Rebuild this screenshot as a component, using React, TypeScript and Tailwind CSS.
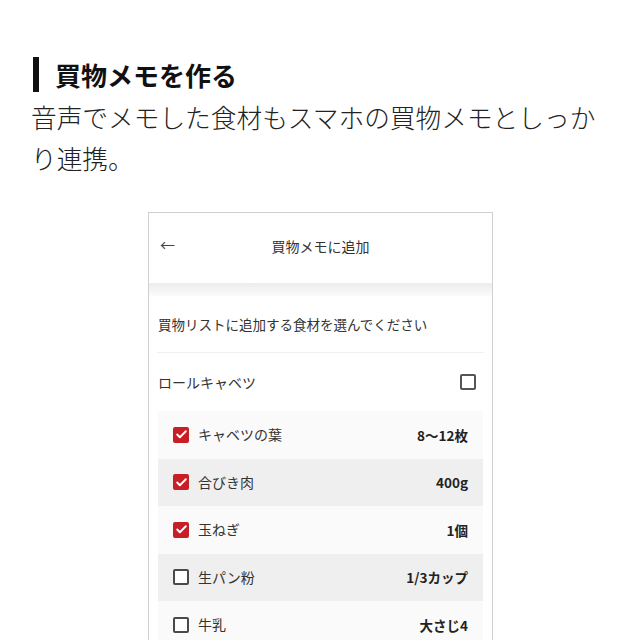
import { Check } from "lucide-react"

const font = { fontFamily: '"Noto Sans CJK JP", "Noto Sans", sans-serif' }

const items = [
    { name: 'キャベツの葉', qty: '8〜12枚', checked: true, bg: 'bg-[#fafafa]' },
    { name: '合びき肉', qty: '400g', checked: true, bg: 'bg-[#efefef]' },
    { name: '玉ねぎ', qty: '1個', checked: true, bg: 'bg-[#fafafa]' },
    { name: '生パン粉', qty: '1/3カップ', checked: false, bg: 'bg-[#efefef]' },
    { name: '牛乳', qty: '大さじ4', checked: false, bg: 'bg-[#fafafa]' },
]

const Box = (params: { checked: boolean }) => {
    if (params.checked) {
        return (
            <span className="w-[16px] h-[16px] rounded-[2px] bg-[#c81f26] flex items-center justify-center shrink-0">
                <Check className="w-[13px] h-[13px] text-white" strokeWidth={3.5} />
            </span>
        )
    }
    return <span className="w-[16px] h-[16px] rounded-[2px] border-2 border-[#4a4a4a] bg-white shrink-0" />
}

export default function App() {
    return (
        <div className="w-[640px] h-[640px] overflow-hidden bg-white text-[#222]" style={font}>
            <div className="pt-[57px] pl-[33px]">
                <div className="flex items-center h-[35px]">
                    <span className="w-[6px] h-[35px] bg-[#111]" />
                    <h1 className="ml-[16px] text-[26px] font-bold leading-none text-[#111]">買物メモを作る</h1>
                </div>
                <p className="mt-[4px] -ml-[2px] w-[590px] text-[25.7px] leading-[41px] font-light text-[#222]">
                    音声でメモした食材もスマホの買物メモとしっかり連携。
                </p>
            </div>

            <div className="mt-[34px] ml-[148px] w-[345px] border border-b-0 border-[#d0d0d0] text-[#333]">
                <div className="h-[70px] flex items-center relative">
                    <span className="absolute left-[11px] top-[24px] text-[15px] leading-none text-[#444]">←</span>
                    <span className="w-full text-center text-[14px] -mt-[4px]">買物メモに追加</span>
                </div>
                <div className="h-[13px] bg-gradient-to-b from-[#ececec] to-[#fbfbfb]" />
                <div className="h-[56px] flex items-center pl-[9px] text-[13.5px]">
                    買物リストに追加する食材を選んでください
                </div>
                <div className="mx-[8px] h-px bg-[#f0f0f0]" />
                <div className="h-[58px] flex items-center justify-between pl-[9px] pr-[16px] text-[14px]">
                    <span>ロールキャベツ</span>
                    <span className="w-[16px] h-[16px] rounded-[2px] border-2 border-[#555]" />
                </div>
                <div className="mx-[9px]">
                    {items.map((item) => (
                        <div key={item.name} className={`${item.bg} h-[47.5px] flex items-center pl-[15px] pr-[15px]`}>
                            <Box checked={item.checked} />
                            <span className="ml-[9px] text-[14px] flex-1">{item.name}</span>
                            <span className="text-[13.5px] font-bold text-[#222]">{item.qty}</span>
                        </div>
                    ))}
                </div>
            </div>
        </div>
    )
}
